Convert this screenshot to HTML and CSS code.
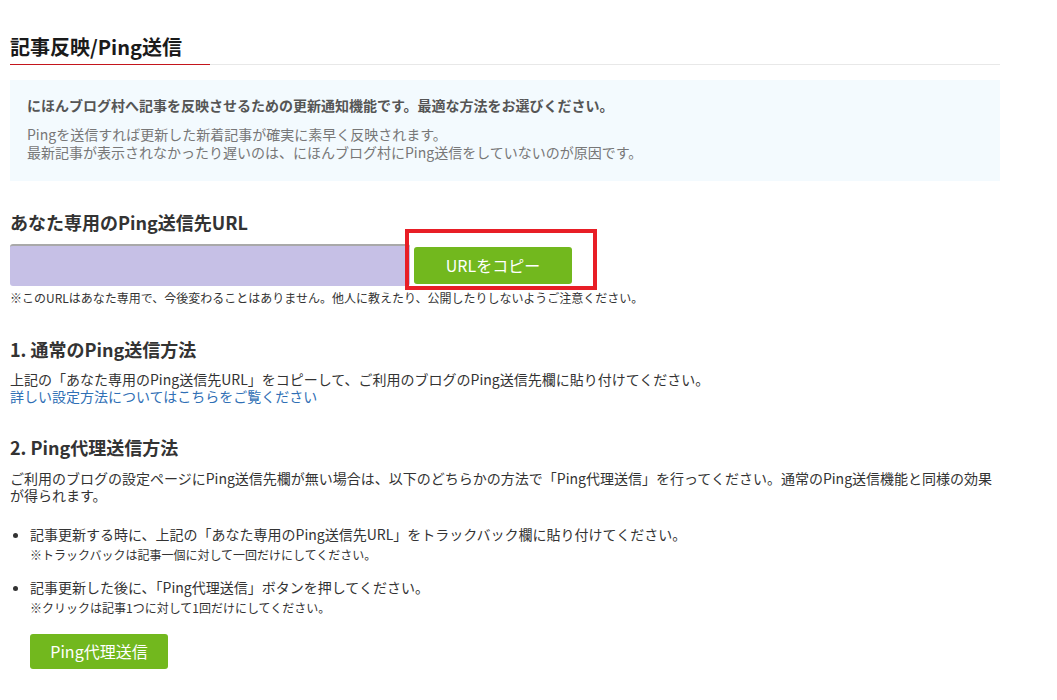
FILE: index.html
```html
<!DOCTYPE html>
<html lang="ja">
<head>
<meta charset="utf-8">
<title>記事反映/Ping送信</title>
<link rel="stylesheet" href="styles.css">
</head>
<body>
<main class="page">
  <div class="title-bar">
    <h1 class="title">記事反映/Ping送信</h1>
  </div>

  <section class="info">
    <p class="info-lead">にほんブログ村へ記事を反映させるための更新通知機能です。最適な方法をお選びください。</p>
    <p class="info-text">Pingを送信すれば更新した新着記事が確実に素早く反映されます。<br>最新記事が表示されなかったり遅いのは、にほんブログ村にPing送信をしていないのが原因です。</p>
  </section>

  <h2 class="sub-title">あなた専用のPing送信先URL</h2>
  <div class="url-row">
    <div class="url-field"></div>
    <button class="btn btn-copy" type="button">URLをコピー</button>
    <div class="highlight"></div>
  </div>
  <p class="note">※このURLはあなた専用で、今後変わることはありません。他人に教えたり、公開したりしないようご注意ください。</p>

  <h3 class="step-title first">1. 通常のPing送信方法</h3>
  <p class="text">上記の「あなた専用のPing送信先URL」をコピーして、ご利用のブログのPing送信先欄に貼り付けてください。<br><a class="link" href="#">詳しい設定方法についてはこちらをご覧ください</a></p>

  <h3 class="step-title second">2. Ping代理送信方法</h3>
  <p class="text para">ご利用のブログの設定ページにPing送信先欄が無い場合は、以下のどちらかの方法で「Ping代理送信」を行ってください。通常のPing送信機能と同様の効果が得られます。</p>

  <ul class="list">
    <li class="item">記事更新する時に、上記の「あなた専用のPing送信先URL」をトラックバック欄に貼り付けてください。
      <span class="item-note">※トラックバックは記事一個に対して一回だけにしてください。</span>
    </li>
    <li class="item second-item">記事更新した後に、「Ping代理送信」ボタンを押してください。
      <span class="item-note">※クリックは記事1つに対して1回だけにしてください。</span>
    </li>
  </ul>
  <button class="btn btn-ping" type="button">Ping代理送信</button>
</main>
</body>
</html>
```

FILE: styles.css
```css
* { box-sizing: border-box; }

html, body {
  margin: 0;
  padding: 0;
  background: #fff;
}

body {
  font-family: "Noto Sans CJK JP", "Noto Sans", sans-serif;
  color: #333;
}

.page {
  width: 1000px;
  padding: 33px 0 30px 10px;
}

p { margin: 0; }

.title-bar {
  border-bottom: 1px solid #e8e8e8;
}

.title {
  width: 200px;
  margin: 0 0 -1px 0;
  padding-bottom: 3px;
  font-size: 20px;
  line-height: 28px;
  font-weight: 700;
  color: #1a1a1a;
  border-bottom: 1px solid #c4151c;
  white-space: nowrap;
}

.info {
  margin-top: 15px;
  padding: 15px 17px 20px;
  background: #f3fafe;
}

.info-lead {
  font-size: 14px;
  line-height: 20px;
  font-weight: 700;
  color: #555;
  margin-bottom: 10px;
}

.info-text {
  font-size: 14px;
  line-height: 18px;
  color: #777;
}

.sub-title {
  margin: 28px 0 0;
  font-size: 18px;
  line-height: 26px;
  font-weight: 700;
  color: #333;
}

.url-row {
  position: relative;
  display: flex;
  align-items: center;
  gap: 4px;
  margin-top: 9px;
  height: 42px;
}

.url-field {
  width: 400px;
  height: 42px;
  background: #c6c0e6;
  border-top: 2px solid #a9a9a9;
  border-radius: 3px;
}

.btn {
  border: none;
  border-radius: 3px;
  background: #72b81e;
  color: #fff;
  font-family: "Noto Sans CJK JP", "Noto Sans", sans-serif;
  font-size: 16px;
  padding: 0;
  cursor: pointer;
}

.btn-copy {
  width: 158px;
  height: 37px;
  line-height: 37px;
}

.highlight {
  position: absolute;
  left: 395px;
  top: -15px;
  width: 192px;
  height: 61px;
  border: 4px solid #e81e26;
  pointer-events: none;
}

.note {
  margin-top: 4px;
  font-size: 12px;
  line-height: 16px;
  color: #333;
}

.step-title {
  margin: 0;
  font-size: 18px;
  line-height: 26px;
  font-weight: 700;
  color: #333;
}

.step-title.first { margin-top: 30px; }
.step-title.second { margin-top: 29px; }

.text {
  margin-top: 9px;
  font-size: 14px;
  line-height: 17px;
  color: #333;
}

.text.para { margin-top: 10px; }

.link {
  color: #2f6fb5;
  text-decoration: none;
}

.list {
  margin: 22px 0 0;
  padding-left: 20px;
}

.item {
  font-size: 14px;
  line-height: 17px;
  color: #333;
}

.item.second-item { margin-top: 16px; }

.item-note {
  display: block;
  margin-top: 4px;
  font-size: 12px;
  line-height: 16px;
}

.btn-ping {
  display: block;
  margin: 18px 0 0 20px;
  width: 138px;
  height: 35px;
  line-height: 35px;
}
```
